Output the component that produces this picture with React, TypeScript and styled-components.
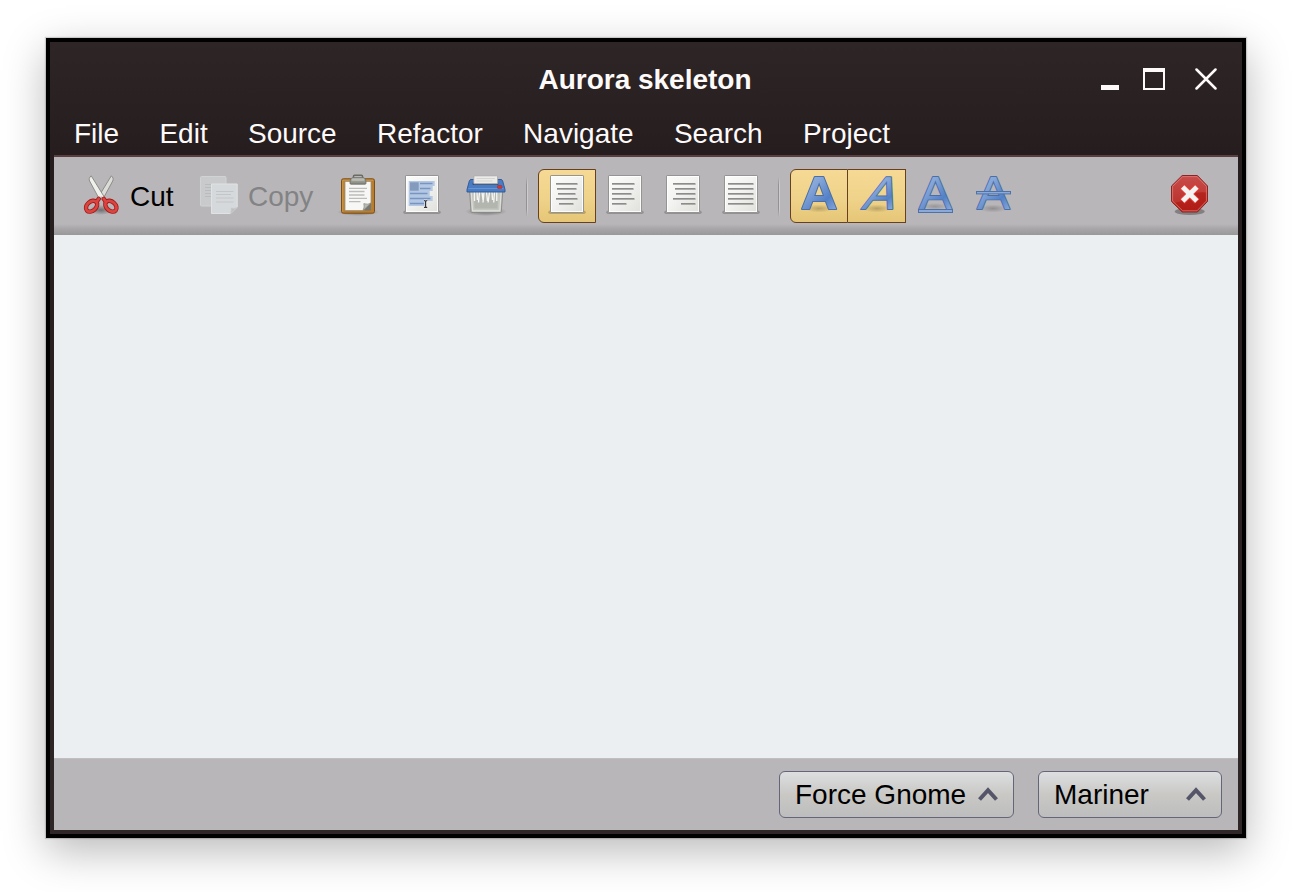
import React from "react";
import styled, { createGlobalStyle } from "styled-components";

const GlobalStyle = createGlobalStyle`
  body { margin: 0; background: #fff; }
  * { box-sizing: border-box; }
`;

const Desktop = styled.div`
  width: 1292px;
  height: 892px;
  padding: 38px 46px 54px;
  overflow: hidden;
  font: 28px/32px "Liberation Sans", Arial, sans-serif;
`;

const Window = styled.div`
  width: 1200px;
  height: 800px;
  display: flex;
  flex-direction: column;
  border: 4px solid #000;
  padding: 0 4px 4px;
  background: linear-gradient(#2d2526 0, #251d1e 113px, #2b2324 600px, #2e2627 100%);
  box-shadow: 0 0 1px 1px rgba(0, 0, 0, 0.16), 0 13px 40px rgba(0, 0, 0, 0.28);
`;

const Header = styled.header`
  height: 115px;
  flex: none;
  border-bottom: 2px solid #5a3f41;
  color: #fffafa;
`;

const TitleBar = styled.div`
  height: 74px;
  display: grid;
  grid-template-columns: 160px 1fr 160px;
  align-items: center;
`;

const Title = styled.h1`
  margin: 2px 0 0 -2px;
  font: inherit;
  font-weight: bold;
  text-align: center;
  grid-column: 2;
`;

const Controls = styled.div`
  display: flex;
  justify-content: flex-end;
  align-items: flex-end;
  padding-right: 21px;
`;

const Minimize = styled.div`
  width: 18px;
  height: 5px;
  background: #fffafa;
  margin-right: 24px;
`;

const Maximize = styled.div`
  width: 22px;
  height: 22px;
  border: 2px solid #fffafa;
  border-top-width: 4px;
  margin-right: 30px;
`;

const CloseGlyph = styled.svg`
  display: block;
  width: 22px;
  height: 22px;
  stroke: #fffafa;
  stroke-width: 2.5;
  stroke-linecap: round;
`;

const MenuBar = styled.nav`
  display: flex;
  gap: 40.3px;
  padding: 2px 20px 0;
`;

const Toolbar = styled.div`
  flex: none;
  height: 78px;
  padding: 12px 26px 12px 25px;
  display: flex;
  align-items: flex-start;
  background: linear-gradient(#b9b6b9 0, #b9b6b9 67px, #aaa8aa 71px, #999899 78px);
`;

const Command = styled.div<{ $width: number; $muted?: boolean }>`
  width: ${(p) => p.$width}px;
  height: 54px;
  display: flex;
  align-items: center;
  gap: 7px;
  color: ${(p) => (p.$muted ? "#828384" : "#000")};
`;

const Label = styled.span`
  padding-top: 2px;
`;

const IconButton = styled.div<{ $width?: number; $on?: boolean; $first?: boolean }>`
  width: ${(p) => p.$width ?? 58}px;
  height: 54px;
  display: flex;
  align-items: center;
  justify-content: center;
  border: 1px solid ${(p) => (p.$on ? "#66401f" : "transparent")};
  border-left-width: ${(p) => (p.$on && !p.$first ? 0 : 1)}px;
  border-radius: ${(p) => (p.$first ? "6px 0 0 6px" : "0")};
  background: ${(p) => (p.$on ? "linear-gradient(#f6d994, #efd38a 55%, #e6c677)" : "none")};
`;

const Separator = styled.div<{ $before: number; $after: number }>`
  width: 2px;
  height: 40px;
  margin: 8px ${(p) => p.$after}px 0 ${(p) => p.$before}px;
  background: linear-gradient(90deg, #949194 50%, #cfccd0 50%);
  mask-image: linear-gradient(transparent, #000 20%, #000 80%, transparent);
`;

const Spacer = styled.div`
  flex: 1;
`;

const Glyph = styled.svg`
  display: block;
  flex: none;
  width: 44px;
  height: 44px;
  overflow: visible;
`;

const Content = styled.main`
  flex: 1;
  background: #ebeff2;
`;

const Footer = styled.footer`
  flex: none;
  height: 72px;
  display: flex;
  justify-content: flex-end;
  gap: 24px;
  padding: 12px 16px 0;
  border-top: 1px solid #c0bec1;
  background: #b9b6b9;
`;

const DropButton = styled.button<{ $width: number }>`
  width: ${(p) => p.$width}px;
  height: 47px;
  padding: 0 15px;
  display: flex;
  align-items: center;
  justify-content: space-between;
  font: inherit;
  color: #000;
  border: 1px solid #65657a;
  border-radius: 6px;
  background: linear-gradient(#dcdee0, #c9c8c5 50%, #bdbdbe);
`;

const ChevronGlyph = styled.svg`
  display: block;
  width: 20px;
  height: 14px;
  margin-bottom: 1px;
  fill: none;
  stroke: #55556a;
  stroke-width: 4;
`;

const Chevron = () => (
  <ChevronGlyph viewBox="0 0 20 14">
    <path d="M1.5 12.5 10 3.2 18.5 12.5" />
  </ChevronGlyph>
);

const Definitions = styled.svg`
  position: absolute;
  width: 0;
  height: 0;
`;

const Shared = () => (
  <Definitions>
    <defs>
      <linearGradient id="sheet" x1="0" y1="0" x2="1" y2="1">
        <stop offset="0" stopColor="#fcfcfb" />
        <stop offset=".45" stopColor="#f3f3f1" />
        <stop offset="1" stopColor="#dfdfdb" />
      </linearGradient>
      <linearGradient id="blue" x1="0" y1="0" x2=".7" y2="1">
        <stop offset="0" stopColor="#a3bce0" />
        <stop offset=".4" stopColor="#86a6d8" />
        <stop offset=".75" stopColor="#5380c6" />
        <stop offset="1" stopColor="#85a7da" />
      </linearGradient>
      <linearGradient id="red" x1="0" y1="0" x2="0" y2="1">
        <stop offset="0" stopColor="#c84d4b" />
        <stop offset="1" stopColor="#b72a23" />
      </linearGradient>
      <linearGradient id="metal" x1="0" y1="0" x2="0" y2="1">
        <stop offset="0" stopColor="#b9bbb3" />
        <stop offset="1" stopColor="#81847b" />
      </linearGradient>
      <radialGradient id="shade">
        <stop offset="0" stopColor="#000" stopOpacity=".4" />
        <stop offset="1" stopColor="#000" stopOpacity="0" />
      </radialGradient>
    </defs>
  </Definitions>
);

const Shade = ({ y = 38, rx = 20, ry = 3, opacity = 1 }: { y?: number; rx?: number; ry?: number; opacity?: number }) => (
  <ellipse cx="22" cy={y} rx={rx} ry={ry} fill="url(#shade)" opacity={opacity} />
);

const Sheet = () => (
  <>
    <rect x="3.3" y="36.5" width="37.4" height="3.6" rx="1.8" fill="#000" opacity=".2" />
    <rect x="5.5" y="1.5" width="33" height="37" rx=".6" fill="url(#sheet)" stroke="#949592" />
    <rect x="6.5" y="2.5" width="31" height="35" fill="none" stroke="#fff" opacity=".85" />
  </>
);

const AlignIcon = ({ rows }: { rows: [number, number][] }) => (
  <Glyph viewBox="0 0 44 44">
    <Sheet />
    {rows.map(([a, b], i) => (
      <g key={i}>
        <rect x={a} y={9 + i * 5} width={b - a} height="2" fill="#c4c4c2" />
        <rect x={a} y={9 + i * 5} width={b - a - 1} height="1.4" fill="#8c8c8a" />
      </g>
    ))}
  </Glyph>
);

const CutIcon = () => (
  <Glyph viewBox="0 0 44 44">
    <Shade y={36} rx={12} ry={5} />
    <g stroke="#85857f" strokeWidth=".9" strokeLinejoin="round">
      <path d="M32.3 1.8C34.3 3.5 34.5 5.4 33.7 7L24.5 24 20.5 25.5 19.8 22.3Z" fill="#dcdcd8" />
      <path d="M12.2 1.8C10.2 3.5 9.8 5.4 10.6 7L19.5 23.5 23.5 25.5 25 22.5Z" fill="#efefec" />
    </g>
    <g fill="none" strokeLinecap="round">
      <g stroke="#a01a1a" strokeWidth="4.4">
        <ellipse cx="12.6" cy="32.2" rx="6.4" ry="4.5" transform="rotate(-42 12.6 32.2)" />
        <ellipse cx="31.9" cy="32.2" rx="6.4" ry="4.5" transform="rotate(42 31.9 32.2)" />
        <path d="M17.5 28 19.8 24.8M27 28 24.7 24.8" />
      </g>
      <g stroke="#dc4440" strokeWidth="2.7">
        <ellipse cx="12.6" cy="32.2" rx="6.4" ry="4.5" transform="rotate(-42 12.6 32.2)" />
        <ellipse cx="31.9" cy="32.2" rx="6.4" ry="4.5" transform="rotate(42 31.9 32.2)" />
        <path d="M17.5 28 19.8 24.8M27 28 24.7 24.8" />
      </g>
    </g>
    <circle cx="22.2" cy="23.3" r=".9" fill="#aaa" />
  </Glyph>
);

const CopyIcon = () => (
  <Glyph viewBox="0 0 44 44">
    <rect x="3.5" y="2.5" width="25.5" height="29.5" rx="1" fill="#c8cacb" stroke="#d0d3d4" />
    <path d="M8 10.5h6M8 13.5h6M8 16.5h6M8 19.5h6M8 22.5h6" stroke="#b9bcbe" />
    <path d="M14.5 10h25.7v23l-6.5 6.5H14.5Z" fill="#d6d9db" stroke="#e0e3e4" />
    <path d="M40 33.5 33.5 39.7Q35 36 34 34Q37 35 40 33.5Z" fill="#bdc0be" stroke="#c7cac8" strokeWidth=".6" />
    <path d="M19 17.5h17.5M19 20.5h15M19 24h17.5M19 28h17.5" stroke="#c3c6c8" strokeWidth="1.2" />
  </Glyph>
);

const PasteIcon = () => (
  <Glyph viewBox="0 0 44 44">
    <Shade y={38} rx={21} ry={4} />
    <rect x="5.5" y="4.8" width="33" height="34.4" rx="1.8" fill="#b87e2e" stroke="#7d4d12" />
    <path d="M6.8 37.8V6.2h30.4" fill="none" stroke="#d3a056" strokeWidth=".8" />
    <path d="M9 7.5h26v22l-7 7H9Z" fill="#f7f7f6" stroke="#9c9484" strokeWidth=".8" />
    <path d="M27 36.4h8v-7.6Z" fill="#777871" />
    <path d="M27 36.4Q28.8 33 27.8 29.6Q32 31 35 29Z" fill="#b8bab4" stroke="#80827b" strokeWidth=".6" />
    <path d="M13 14.3h18M13 17.5h15.5M13 21h15.5M13 24.3h18M13 27.7h11.5" stroke="#bcbcba" strokeWidth="1.3" />
    <path d="M17.5 4V2.2q0-1 1-1h7q1 0 1 1V4" fill="none" stroke="#696c63" strokeWidth="1.5" />
    <path d="M14 9.2Q14 3.6 17 3.6h10q3 0 3 5.6 0 1-1 1H15q-1 0-1-1Z" fill="url(#metal)" stroke="#696c64" strokeWidth=".8" />
    <path d="M16 6h12" stroke="#c9cbc4" />
  </Glyph>
);

const SelectIcon = () => (
  <Glyph viewBox="0 0 44 44">
    <Sheet />
    <path d="M8.7 7h26v5h-2v5h-3v5h3v5h-7v5h-17Z" fill="#b4c8e4" />
    <rect x="10" y="8.3" width="8.7" height="8.4" fill="#839bbd" />
    <path d="M20 9.5h12.5M20 14.5h10.5M10 19.5h17.5M10 24.5h20.5M10 29.5h14" stroke="#7895c1" strokeWidth="1.5" />
    <path d="M24 26.5q1.6 0 1.6 1v5q0 1-1.6 1M27.2 26.5q-1.6 0-1.6 1v5q0 1 1.6 1" fill="none" stroke="#fff" strokeWidth="2.4" opacity=".5" />
    <path d="M24 26.5q1.6 0 1.6 1v5q0 1-1.6 1M27.2 26.5q-1.6 0-1.6 1v5q0 1 1.6 1" fill="none" stroke="#333" strokeWidth="1.2" />
  </Glyph>
);

const ShredIcon = () => (
  <Glyph viewBox="0 0 44 44">
    <Shade y={37.5} rx={21} ry={4.5} />
    <path d="M5.6 17h33.2l-1.5 20.5q0 1-1 1H8q-1 0-1-1Z" fill="#c3c5bf" stroke="#868782" strokeWidth=".9" />
    <path d="M7.3 18.5 8.5 36.8h27.3L37 18.5" fill="none" stroke="#e2e3df" />
    <path d="M9.8 18h24.4l-.7 16.5H10.5Z" fill="#b3b5af" />
    <path d="M10.5 18v9M13 18l.4 8M15.5 18l-1 10.5M18 18l1 8M20 18l-1 10.5M22.5 18l1 9M25.5 18l-1.4 10.5M28 18l.5 8M30.5 18l-.8 10.5M32.8 18v9" stroke="#f5f5f3" strokeWidth="1.4" />
    <path d="M7 5.5h30q1 0 1.6 1.2L41 15.5V18H3v-2.5L5.4 6.7Q6 5.5 7 5.5Z" fill="#4a7cc3" stroke="#28569b" strokeWidth=".9" />
    <path d="M4.5 14.5h35" stroke="#6f9ad6" strokeWidth=".8" />
    <rect x="8.7" y="8.6" width="25.5" height="2.2" fill="#263c61" />
    <path d="M9.8 9.8v-7q0-1 1-1h21.8q1 0 1 1v7Z" fill="#ecebea" stroke="#a5a5a3" strokeWidth=".8" />
    <path d="M12.5 4.5h18.5M12.5 7h16" stroke="#cfcfcd" strokeWidth=".8" />
    <rect x="33.5" y="11.5" width="4.4" height="2.9" rx=".6" fill="#df342e" stroke="#96323d" strokeWidth=".6" />
  </Glyph>
);

const Letter = styled.text`
  font-family: "Liberation Sans", Arial, sans-serif;
  font-size: 48px;
  paint-order: stroke;
  fill: url(#blue);
  stroke: #4a6fa6;
  stroke-width: 2px;
  stroke-linejoin: round;
`;

const BoldIcon = () => (
  <Glyph viewBox="0 0 44 44">
    <Shade y={34.5} rx={14} ry={4} opacity={0.55} />
    <Letter fontWeight="bold" transform="translate(3.8 35.2) scale(1.06 .96)">A</Letter>
  </Glyph>
);

const ItalicIcon = () => (
  <Glyph viewBox="0 0 44 44">
    <Shade y={34.5} rx={14} ry={4} opacity={0.55} />
    <Letter transform="translate(6 35.2) skewX(-20) scale(.98 .96)">A</Letter>
  </Glyph>
);

const UnderlineIcon = () => (
  <Glyph viewBox="0 0 44 44">
    <Shade y={32.5} rx={13} ry={3.5} opacity={0.45} />
    <Letter transform="translate(6.1 34.5) scale(1.02 .97)">A</Letter>
    <rect x="5.5" y="35.5" width="34" height="3" fill="#8baada" stroke="#4e72a8" />
  </Glyph>
);

const StrikeIcon = () => (
  <Glyph viewBox="0 0 44 44">
    <Shade y={34.5} rx={14} ry={4} opacity={0.55} />
    <Letter transform="translate(6.1 35.3) scale(1.02 .96)">A</Letter>
    <rect x="5.5" y="17.5" width="34" height="2.4" fill="#8baada" stroke="#4e72a8" />
  </Glyph>
);

const StopIcon = () => (
  <Glyph viewBox="0 0 44 44">
    <ellipse cx="21.7" cy="37.5" rx="15" ry="3.5" fill="#000" opacity=".3" />
    <path d="M14.2 1.5h15.2L39.5 12v15.4L29.4 38H14.2L3.5 27.4V12Z" fill="url(#red)" stroke="#8e2421" />
    <path d="M4.5 29Q21 27 22 20 30 17.5 39 18.5V27L29 37.5H14.5Z" fill="#a80d06" opacity=".5" />
    <path d="M14.7 2.6h14.3L38.4 12.4v14.6L29 36.8H14.7L4.6 27V12.4Z" fill="none" stroke="#dd7c76" strokeWidth=".8" />
    <path d="M14.3 12.6 29.2 27.4M29.2 12.6 14.3 27.4" stroke="#ed3733" strokeWidth="6.8" />
    <path d="M14.6 12.9 28.9 27.1M28.9 12.9 14.6 27.1" stroke="#f3f3f1" strokeWidth="4.9" />
  </Glyph>
);

const menus = ["File", "Edit", "Source", "Refactor", "Navigate", "Search", "Project"];

export default function App() {
  return (
    <Desktop>
      <GlobalStyle />
      <Shared />
      <Window>
        <Header>
          <TitleBar>
            <Title>Aurora skeleton</Title>
            <Controls>
              <Minimize />
              <Maximize />
              <CloseGlyph viewBox="0 0 22 22">
                <path d="M1.5 1.5 20.5 20.5M20.5 1.5 1.5 20.5" />
              </CloseGlyph>
            </Controls>
          </TitleBar>
          <MenuBar>
            {menus.map((m) => (
              <span key={m}>{m}</span>
            ))}
          </MenuBar>
        </Header>
        <Toolbar>
          <Command $width={118}>
            <CutIcon />
            <Label>Cut</Label>
          </Command>
          <Command $width={129} $muted>
            <CopyIcon />
            <Label>Copy</Label>
          </Command>
          <IconButton $width={64}><PasteIcon /></IconButton>
          <IconButton $width={64}><SelectIcon /></IconButton>
          <IconButton $width={64}><ShredIcon /></IconButton>
          <Separator $before={8} $after={10} />
          <IconButton $on $first>
            <AlignIcon rows={[[11, 33], [12, 32], [13, 31], [11, 33], [14, 29]]} />
          </IconButton>
          <IconButton>
            <AlignIcon rows={[[9, 32], [9, 31], [9, 29], [9, 32], [9, 24]]} />
          </IconButton>
          <IconButton>
            <AlignIcon rows={[[12, 35], [14, 35], [15, 35], [12, 35], [20, 35]]} />
          </IconButton>
          <IconButton>
            <AlignIcon rows={[[9, 35], [9, 35], [9, 35], [9, 35], [9, 35]]} />
          </IconButton>
          <Separator $before={8} $after={10} />
          <IconButton $on $first><BoldIcon /></IconButton>
          <IconButton $on><ItalicIcon /></IconButton>
          <IconButton><UnderlineIcon /></IconButton>
          <IconButton><StrikeIcon /></IconButton>
          <Spacer />
          <Command $width={44}><StopIcon /></Command>
        </Toolbar>
        <Content />
        <Footer>
          <DropButton $width={235}>
            Force Gnome
            <Chevron />
          </DropButton>
          <DropButton $width={184}>
            Mariner
            <Chevron />
          </DropButton>
        </Footer>
      </Window>
    </Desktop>
  );
}
